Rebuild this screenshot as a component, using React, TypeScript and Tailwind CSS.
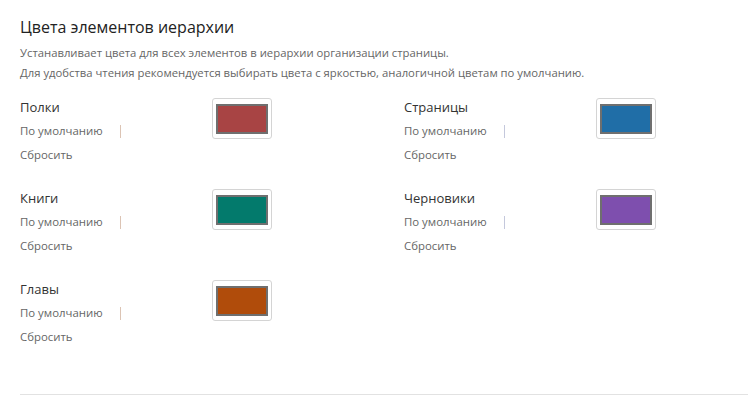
import React from "react";

type Item = { label: string; color: string; bar: string };

const items: Item[] = [
  { label: "Полки", color: "bg-[#a84444]", bar: "bg-[#dcc4b4]" },
  { label: "Страницы", color: "bg-[#206ea7]", bar: "bg-[#c4c8dc]" },
  { label: "Книги", color: "bg-[#037a6c]", bar: "bg-[#dcc4b4]" },
  { label: "Черновики", color: "bg-[#7e4fae]", bar: "bg-[#c4c8dc]" },
  { label: "Главы", color: "bg-[#b04c0b]", bar: "bg-[#dcc4b4]" },
];

const ColorItem = ({ item }: { item: Item }) => (
  <div className="flex">
    <div className="w-[192px] flex flex-col">
      <div className="text-[13px] leading-[18px] text-[#333]">{item.label}</div>
      <div className="mt-[3px] flex items-center h-[24px] text-[11.4px] text-[#666]">
        <span>По умолчанию</span>
        <span className={"ml-[17px] w-px h-[13px] " + item.bar}></span>
      </div>
      <div className="h-[24px] leading-[24px] text-[11.4px] text-[#666]">Сбросить</div>
    </div>
    <div className="h-[41px] w-[60px] border border-[#d4d4d4] rounded-[3px] flex items-center justify-center">
      <div className={"w-[52px] h-[30px] border-2 border-[#6f6f6f] " + item.color}></div>
    </div>
  </div>
);

export default function App() {
  return (
    <div className="w-[748px] h-[395px] bg-white overflow-hidden" style={{ fontFamily: '"Open Sans", "Noto Sans", sans-serif' }}>
      <div className="ml-[20px] pt-[16px] pb-[45px] border-b border-[#e2e2e2]">
        <h2 className="text-[16px] leading-[22px] text-[#222]">Цвета элементов иерархии</h2>
        <div className="mt-[5px] text-[11.3px] leading-[20px] text-[#666]">
          <p>Устанавливает цвета для всех элементов в иерархии организации страницы.</p>
          <p>Для удобства чтения рекомендуется выбирать цвета с яркостью, аналогичной цветам по умолчанию.</p>
        </div>
        <div className="mt-[15px] grid grid-cols-[384px_1fr] gap-y-[22px]">
          {items.map((it) => (
            <ColorItem key={it.label} item={it} />
          ))}
        </div>
      </div>
    </div>
  );
}
